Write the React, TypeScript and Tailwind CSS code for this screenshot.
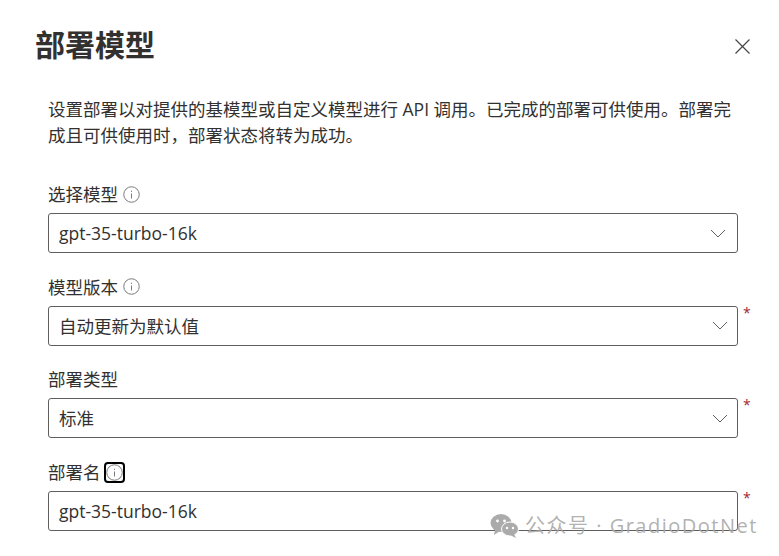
const cjk = '[font-family:"Open_Sans","Noto_Sans_CJK_SC",sans-serif]';

const InfoIcon = ({ focused }: { focused?: boolean }) => (
    <span className={`flex h-[21px] w-[21px] items-center justify-center rounded-[4px] ${focused ? 'border-2 border-black' : ''}`}>
        <svg width="17" height="17" viewBox="0 0 17 17" fill="none">
            <circle cx="8.5" cy="8.5" r="7.75" stroke="#7a7a7a" strokeWidth="1" />
            <rect x="8" y="7.5" width="1" height="5" fill="#7a7a7a" />
            <rect x="8" y="4.7" width="1" height="1.2" fill="#7a7a7a" />
        </svg>
    </span>
);

const Chevron = () => (
    <svg width="16" height="9" viewBox="0 0 16 9" fill="none">
        <path d="M1 1L8 8L15 1" stroke="#616161" strokeWidth="1" />
    </svg>
);

type FieldProps = {
    label: string;
    value: string;
    info?: boolean;
    focused?: boolean;
    required?: boolean;
    select?: boolean;
};

const Field = ({ label, value, info, focused, required, select }: FieldProps) => (
    <div className="flex flex-col">
        <div className="flex h-[36px] items-center gap-[3px] pb-[2px] text-[17.5px] text-[#323130]">
            <span>{label}</span>
            {info && <InfoIcon focused={focused} />}
        </div>
        <div className="flex items-start">
            <div className={`flex h-[40px] w-[690px] shrink-0 items-center justify-between rounded-[3px] border border-[#605e5c] bg-white pl-[10px] ${required ? 'pr-[9px]' : 'pr-[11px]'}`}>
                <span className="text-[17.5px] text-[#323130]">{value}</span>
                {select && <Chevron />}
            </div>
            {required && <span className="ml-[5px] -mt-[3px] text-[14px] leading-[20px] text-[#a4262c]">*</span>}
        </div>
    </div>
);

const Watermark = () => (
    <div className="absolute left-[490px] top-[512px] flex items-center gap-[6px] text-[20px] leading-[28px] tracking-[1.5px] text-[#a8a8a8]/90">
        <svg width="29" height="24" viewBox="0 0 29 24" fill="#ababab">
            <ellipse cx="11" cy="9" rx="10.5" ry="9" />
            <path d="M5 15L4 21L10 17Z" />
            <ellipse cx="20" cy="15" rx="8.5" ry="7" stroke="#fff" strokeWidth="1" />
            <path d="M24 20L26 24L20 21Z" />
            <circle cx="7.5" cy="7" r="1.4" fill="#fff" />
            <circle cx="14.5" cy="7" r="1.4" fill="#fff" />
            <circle cx="17" cy="14" r="1.2" fill="#fff" />
            <circle cx="23" cy="14" r="1.2" fill="#fff" />
        </svg>
        <span>公众号 · GradioDotNet</span>
    </div>
);

const App = () => {
    return (
        <div className={`relative h-[556px] w-[779px] overflow-hidden bg-white ${cjk}`}>
            {/* Header */}
            <div className="flex items-start justify-between pl-[35px] pr-[29px] pt-[24px]">
                <h1 className="text-[30px] font-bold leading-[42px] text-[#323130]">部署模型</h1>
                <svg className="mt-[15px]" width="15" height="15" viewBox="0 0 15 15" fill="none">
                    <path d="M0.5 0.5L14.5 14.5M14.5 0.5L0.5 14.5" stroke="#484644" strokeWidth="1.2" />
                </svg>
            </div>

            <div className="px-[48px]">
                <p className="mt-[30px] w-[690px] text-[17.5px] leading-[26px] text-[#323130]">
                    设置部署以对提供的基模型或自定义模型进行 API 调用。已完成的部署可供使用。部署完成且可供使用时，部署状态将转为成功。
                </p>

                <div className="mt-[29px] flex flex-col gap-[16.7px]">
                    <Field label="选择模型" value="gpt-35-turbo-16k" info select />
                    <Field label="模型版本" value="自动更新为默认值" info select required />
                    <Field label="部署类型" value="标准" select required />
                    <Field label="部署名" value="gpt-35-turbo-16k" info focused required />
                </div>
            </div>

            <Watermark />
        </div>
    );
};

export default App;
